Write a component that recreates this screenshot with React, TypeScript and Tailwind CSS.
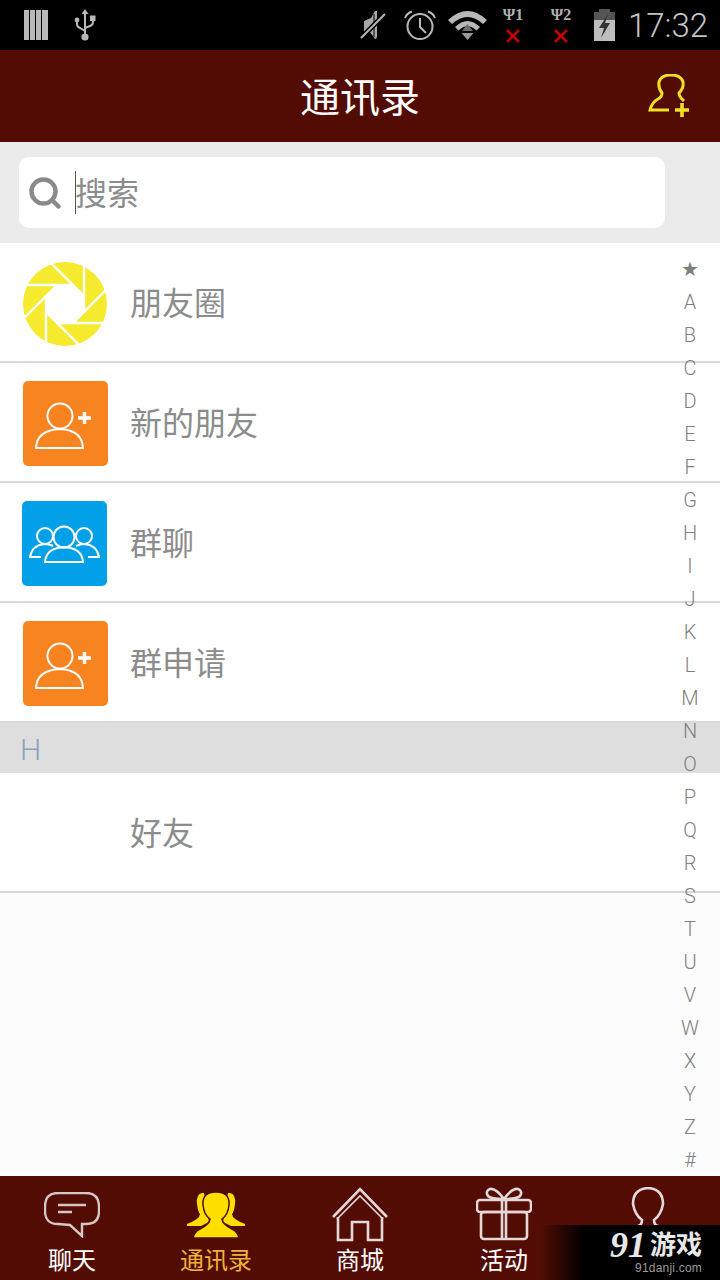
import { Search } from "lucide-react"

const indexLetters = ["★", "A", "B", "C", "D", "E", "F", "G", "H", "I", "J", "K", "L", "M", "N", "O", "P", "Q", "R", "S", "T", "U", "V", "W", "X", "Y", "Z", "#"]

const cjk = "font-['Roboto','Noto_Sans_CJK_SC',sans-serif]"

function SimIcon() {
  return (
    <svg width="24" height="30" viewBox="0 0 24 30" fill="#b8b8b8">
      <rect x="0" y="0" width="5" height="30" />
      <rect x="6" y="0" width="5" height="30" />
      <rect x="12" y="0" width="5" height="30" />
      <rect x="18" y="0" width="6" height="30" />
    </svg>
  )
}

function UsbIcon() {
  return (
    <svg width="22" height="32" viewBox="0 0 22 32" fill="none" stroke="#b8b8b8" strokeWidth="2">
      <path d="M11 3V26" />
      <path d="M11 0L7.5 5H14.5Z" fill="#b8b8b8" stroke="none" />
      <circle cx="11" cy="28" r="3.6" fill="#b8b8b8" stroke="none" />
      <path d="M3 12V15Q3 18 6 19L11 22" />
      <circle cx="3" cy="11" r="2.4" fill="#b8b8b8" stroke="none" />
      <path d="M19 11V13Q19 16 16 17L11 19" />
      <rect x="16" y="6.5" width="5.5" height="5.5" fill="#b8b8b8" stroke="none" />
    </svg>
  )
}

function MuteIcon() {
  return (
    <svg width="26" height="30" viewBox="0 0 26 30" fill="none">
      <path d="M4 11L11 8L15 1H17V26Q17 29 15 29L10 22H4Z" fill="#a8a8a8" />
      <path d="M14 4L14 27" stroke="#000" strokeWidth="1" />
      <path d="M1 28L25 4" stroke="#000" strokeWidth="5" />
      <path d="M1 28L25 4" stroke="#b8b8b8" strokeWidth="2" />
    </svg>
  )
}

function AlarmIcon() {
  return (
    <svg width="32" height="30" viewBox="0 0 32 30" fill="none" stroke="#b8b8b8" strokeWidth="2">
      <circle cx="16" cy="16.5" r="12.5" />
      <path d="M16 8V17L22 23" />
      <path d="M1 8Q3 3 8 1.5" />
      <path d="M31 8Q29 3 24 1.5" />
    </svg>
  )
}

function WifiIcon() {
  return (
    <svg width="39" height="30" viewBox="0 0 39 30">
      <path d="M0 10Q19.5 -8 39 10L35 14Q19.5 0 4 14Z" fill="#b8b8b8" />
      <path d="M7 17Q19.5 5 32 17L28.5 20.5Q19.5 12 10.5 20.5Z" fill="#b8b8b8" />
      <path d="M19.5 14L25 21H14Z" fill="#6e6e6e" />
      <path d="M13.5 23H25.5L19.5 30Z" fill="#9a9a9a" />
    </svg>
  )
}

function SignalSlot({ n }: { n: string }) {
  return (
    <div className="flex flex-col items-center w-[24px]">
      <span className="font-['Liberation_Serif',serif] font-bold text-[16px] leading-[14px] text-[#b0b0b0] whitespace-nowrap">Ψ{n}</span>
      <svg width="14" height="14" viewBox="0 0 14 14" className="mt-[7px]" stroke="#c40000" strokeWidth="2.6">
        <path d="M1 1L13 13M13 1L1 13" />
      </svg>
    </div>
  )
}

function BatteryIcon() {
  return (
    <svg width="21" height="32" viewBox="0 0 21 32">
      <rect x="5" y="0" width="11" height="4" fill="#555" />
      <rect x="0" y="3" width="21" height="8" fill="#555" />
      <rect x="0" y="11" width="21" height="21" fill="#bdbdbd" />
      <path d="M14 5L5 19H10L7 29L16 14H11Z" fill="#333" />
    </svg>
  )
}

function AddFriendHeaderIcon() {
  return (
    <svg width="44" height="44" viewBox="0 0 44 44" fill="none" stroke="#f0e020" strokeWidth="3">
      <path d="M21 36H2Q4 28 10 25Q14 23 14 19Q10 14 11 8Q13 1 23 1Q33 1 35 8Q36 14 31 19Q31 22 33 24L36 27" />
      <path d="M34 29V43M27 36H41" strokeWidth="3.6" />
    </svg>
  )
}

function ApertureIcon() {
  const angles = [0, 45, 90, 135, 180, 225, 270, 315]
  return (
    <svg width="84" height="84" viewBox="-42 -42 84 84" className="ml-px">
      <circle cx="0" cy="0" r="42" fill="#f5ea2e" />
      <polygon points="19,7.9 7.9,19 -7.9,19 -19,7.9 -19,-7.9 -7.9,-19 7.9,-19 19,-7.9" fill="#ffffff" />
      {angles.map((a) => (
        <path key={a} d="M19 -43V8" stroke="#ffffff" strokeWidth="2.4" transform={`rotate(${a})`} />
      ))}
    </svg>
  )
}

function AddPersonTile() {
  return (
    <div className="ml-px w-[85px] h-[85px] rounded-[5px] bg-[#f78420] flex items-center justify-center">
      <svg width="85" height="85" viewBox="0 0 85 85" fill="none" stroke="#ffffff" strokeWidth="2">
        <circle cx="37" cy="35" r="12.5" />
        <path d="M13 67Q14 49 37 48Q59 49 60 67Z" />
        <path d="M55 37H68M61.5 31V43" strokeWidth="3.4" />
      </svg>
    </div>
  )
}

function GroupTile() {
  return (
    <div className="w-[85px] h-[85px] rounded-[5px] bg-[#02a0e8] flex items-center justify-center">
      <svg width="85" height="85" viewBox="0 0 85 85" fill="none" stroke="#ffffff" strokeWidth="2">
        <circle cx="42" cy="36" r="10.5" />
        <path d="M23 61Q24 47 42 46Q60 47 61 61Z" />
        <circle cx="23" cy="35" r="8" />
        <path d="M31 45Q27 43 23 43Q10 44 8 56H19" />
        <circle cx="62" cy="35" r="8" />
        <path d="M54 45Q58 43 62 43Q75 44 77 56H66" />
      </svg>
    </div>
  )
}

function ListRow({ icon, label }: { icon?: React.ReactNode; label: string }) {
  return (
    <div className="h-[120px] bg-white border-b-2 border-[#d8d8d8] flex items-center pt-[3px]">
      <div className="w-[130px] pl-[22px] shrink-0">{icon}</div>
      <span className="text-[32px] text-[#8c8c8c]">{label}</span>
    </div>
  )
}

function TabItem({ icon, label, active }: { icon: React.ReactNode; label?: string; active?: boolean }) {
  return (
    <div className="flex-1 flex flex-col items-center pt-[11px]">
      <div className="h-[60px] flex items-start justify-center">{icon}</div>
      {label && <span className={`text-[24px] leading-[28px] ${active ? "text-[#eeb23a]" : "text-white"}`}>{label}</span>}
    </div>
  )
}

function ChatTabIcon() {
  return (
    <svg width="56" height="46" viewBox="0 0 56 46" fill="none" stroke="#d6c6c4" strokeWidth="2.4" className="mt-[5px]">
      <path d="M14 1H42Q55 1 55 15V19Q55 32 42 32H38V44L26 33L14 32Q1 32 1 19V15Q1 1 14 1Z" />
      <path d="M14 13H42M14 20H28" strokeWidth="2.4" />
    </svg>
  )
}

function FriendsTabIcon() {
  return (
    <svg width="58" height="46" viewBox="0 0 58 46" fill="#ffdf00" className="mt-[5px]">
      <path d="M15 1Q9 2 10 12Q11 20 13 22Q13 27 0 32V34H14L22 30L17 1Z" />
      <path d="M43 1Q49 2 48 12Q47 20 45 22Q45 27 58 32V34H44L36 30L41 1Z" />
      <path d="M29 0Q15 0 16 13Q17 23 23 27Q23 32 13 37Q7 40 6 46H52Q51 40 45 37Q35 32 35 27Q41 23 42 13Q43 0 29 0Z" stroke="#520c04" strokeWidth="1.5" />
    </svg>
  )
}

function ShopTabIcon() {
  return (
    <svg width="56" height="56" viewBox="0 0 56 56" fill="none" stroke="#e4d8d6" strokeWidth="2.6">
      <path d="M1 30L28 2L55 30" />
      <path d="M5 32L28 9L51 32" strokeWidth="1.6" />
      <path d="M6 30V53H20V35H36V53H50V30" />
    </svg>
  )
}

function GiftTabIcon() {
  return (
    <svg width="56" height="54" viewBox="0 0 56 54" fill="none" stroke="#e4d8d6" strokeWidth="2.6">
      <rect x="1" y="13" width="54" height="12" rx="3" />
      <rect x="5" y="25" width="46" height="27" rx="3" />
      <path d="M26 13V52M30 13V52" />
      <path d="M28 12Q20 1 14 2Q9 4 12 9Q15 12 28 12Q41 12 44 9Q47 4 42 2Q36 1 28 12Z" />
    </svg>
  )
}

function MeTabIcon() {
  return (
    <svg width="56" height="50" viewBox="0 0 56 50" fill="none" stroke="#e4d8d6" strokeWidth="2.6">
      <path d="M6 50Q8 42 18 39Q22 38 22 33Q15 28 13 17Q13 2 28 1Q43 2 43 17Q41 28 34 33Q34 38 38 39Q48 42 50 50" />
    </svg>
  )
}

export default function App() {
  return (
    <div className={`relative w-[720px] h-[1280px] flex flex-col overflow-hidden bg-[#fcfcfc] ${cjk}`}>
      {/* Status bar */}
      <div className="h-[50px] bg-black flex items-center shrink-0">
        <div className="ml-[24px]"><SimIcon /></div>
        <div className="ml-[26px]"><UsbIcon /></div>
        <div className="ml-[264px]"><MuteIcon /></div>
        <div className="ml-[18px]"><AlarmIcon /></div>
        <div className="ml-[12px]"><WifiIcon /></div>
        <div className="ml-[14px]"><SignalSlot n="1" /></div>
        <div className="ml-[24px]"><SignalSlot n="2" /></div>
        <div className="ml-[21px]"><BatteryIcon /></div>
        <span className="ml-[13px] font-['Roboto',sans-serif] font-light text-[33px] text-[#c4c4c4] leading-none">17:32</span>
      </div>

      {/* Header */}
      <div className="h-[92px] bg-[#520c04] flex items-center justify-center relative shrink-0 pt-[6px]">
        <span className="text-white text-[40px]">通讯录</span>
        <div className="absolute left-[648px] top-[24px]"><AddFriendHeaderIcon /></div>
      </div>

      {/* Search */}
      <div className="h-[101px] bg-[#ebebeb] shrink-0 pl-[19px] pt-[15px]">
        <div className="w-[646px] h-[71px] bg-white rounded-[10px] flex items-center">
          <Search className="ml-[8px] text-[#8a8a8a]" size={36} strokeWidth={3} />
          <div className="ml-[12px] w-px h-[43px] bg-[#555]" />
          <span className="-ml-px text-[32px] text-[#8c8c8c] pt-[2px]">搜索</span>
        </div>
      </div>

      {/* List */}
      <ListRow icon={<ApertureIcon />} label="朋友圈" />
      <ListRow icon={<AddPersonTile />} label="新的朋友" />
      <ListRow icon={<GroupTile />} label="群聊" />
      <ListRow icon={<AddPersonTile />} label="群申请" />
      <div className="h-[50px] bg-[#dedede] flex items-center pl-[20px] pt-[2px] shrink-0">
        <span className="font-['Roboto',sans-serif] font-light text-[30px] text-[#8fa3b8]">H</span>
      </div>
      <ListRow label="好友" />
      <div className="flex-1" />

      {/* Tab bar */}
      <div className="h-[104px] bg-[#520c04] flex shrink-0">
        <TabItem icon={<ChatTabIcon />} label="聊天" />
        <TabItem icon={<FriendsTabIcon />} label="通讯录" active />
        <TabItem icon={<ShopTabIcon />} label="商城" />
        <TabItem icon={<GiftTabIcon />} label="活动" />
        <TabItem icon={<MeTabIcon />} />
      </div>

      {/* Alphabet index */}
      <div className="absolute right-[10px] top-[253px] w-[40px] flex flex-col items-center">
        {indexLetters.map((l) => (
          <span key={l} className="h-[33px] leading-[33px] font-['Roboto','DejaVu_Sans',sans-serif] font-light text-[20px] text-[#808080]">{l}</span>
        ))}
      </div>

      {/* Watermark */}
      <div className="absolute right-0 bottom-0 w-[180px] h-[55px] bg-gradient-to-r from-transparent via-black via-[25%] to-black flex flex-col items-end pr-[18px] pt-[5px]">
        <div className="flex items-center h-[30px] text-[#e8e8e8] font-bold leading-none">
          <span className="font-['Liberation_Serif',serif] italic text-[36px]">91</span>
          <span className="ml-[4px] text-[26px]">游戏</span>
        </div>
        <span className="font-['Liberation_Sans',sans-serif] text-[12px] leading-[16px] tracking-[0.2px] text-[#9a9a9a]">91danji.com</span>
      </div>
    </div>
  )
}
